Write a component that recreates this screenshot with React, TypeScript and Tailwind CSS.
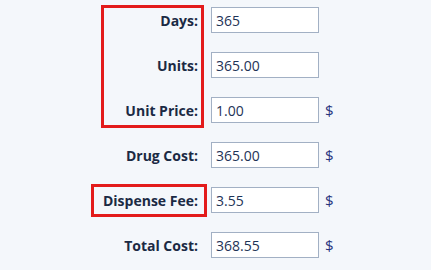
import React from 'react';

const rows = [
  { label: 'Days:', value: '365', dollar: false },
  { label: 'Units:', value: '365.00', dollar: false },
  { label: 'Unit Price:', value: '1.00', dollar: true },
  { label: 'Drug Cost:', value: '365.00', dollar: true },
  { label: 'Dispense Fee:', value: '3.55', dollar: true },
  { label: 'Total Cost:', value: '368.55', dollar: true },
];

export default function App() {
  return (
    <div
      className="relative w-[431px] h-[270px] bg-[#f4f7fb] overflow-hidden pt-[7px]"
      style={{ fontFamily: '"Open Sans", "Noto Sans", sans-serif' }}
    >
      <div className="flex flex-col gap-[19px]">
        {rows.map((r) => (
          <div key={r.label} className="flex items-center h-[26px]">
            <div className="w-[198px] text-right text-[14px] font-bold text-[#1b2a44]">
              {r.label}
            </div>
            <input
              readOnly
              value={r.value}
              className="ml-[13px] w-[108px] h-[26px] border border-[#a2b0c4] bg-white px-[4px] text-[14px] text-[#1e3357] outline-none"
            />
            {r.dollar && <span className="ml-[6px] text-[15px] text-[#27357e]">$</span>}
          </div>
        ))}
      </div>

      {/* highlight boxes */}
      <div className="absolute left-[101px] top-[5px] w-[103px] h-[123px] border-[3px] border-[#e31b1b]" />
      <div className="absolute left-[91px] top-[184px] w-[116px] h-[33px] border-[3px] border-[#e31b1b]" />
    </div>
  );
}
